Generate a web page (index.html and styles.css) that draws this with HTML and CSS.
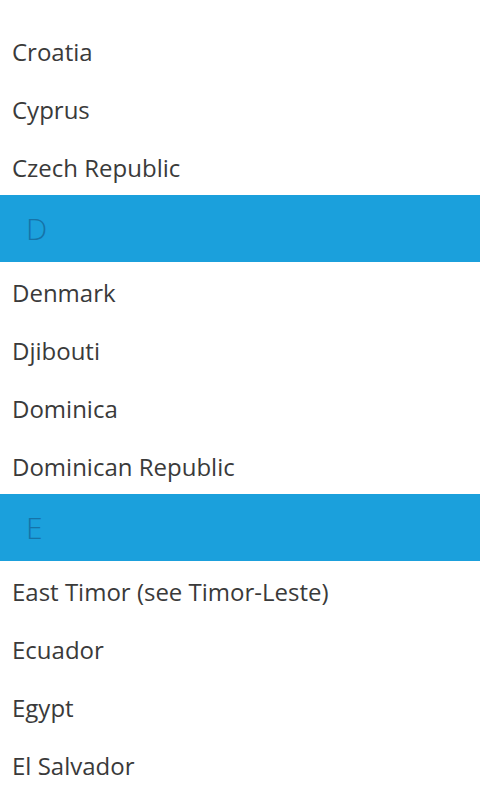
FILE: index.html
```html
<!DOCTYPE html>
<html>
<head>
<meta charset="utf-8">
<link rel="stylesheet" href="styles.css">
</head>
<body>
<div class="list">
  <div class="row">Croatia</div>
  <div class="row">Cyprus</div>
  <div class="row">Czech Republic</div>
  <div class="header">D</div>
  <div class="row">Denmark</div>
  <div class="row">Djibouti</div>
  <div class="row">Dominica</div>
  <div class="row">Dominican Republic</div>
  <div class="header">E</div>
  <div class="row">East Timor (see Timor-Leste)</div>
  <div class="row">Ecuador</div>
  <div class="row">Egypt</div>
  <div class="row">El Salvador</div>
</div>
</body>
</html>
```
FILE: styles.css
```css
html, body {
  margin: 0;
  padding: 0;
  background: #ffffff;
}
body {
  width: 480px;
  height: 800px;
  overflow: hidden;
  font-family: "Open Sans", "Noto Sans", sans-serif;
}
.list {
  display: flex;
  flex-direction: column;
  padding-top: 21px;
}
.row {
  height: 58px;
  display: flex;
  align-items: center;
  padding: 3px 12px 0;
  box-sizing: border-box;
  font-size: 24px;
  color: #3a3a3a;
}
.header {
  height: 67px;
  display: flex;
  align-items: center;
  padding: 0 26px;
  box-sizing: border-box;
  background: #1ba0dc;
  color: #1673a8;
  font-size: 30px;
  font-weight: 300;
}
```
